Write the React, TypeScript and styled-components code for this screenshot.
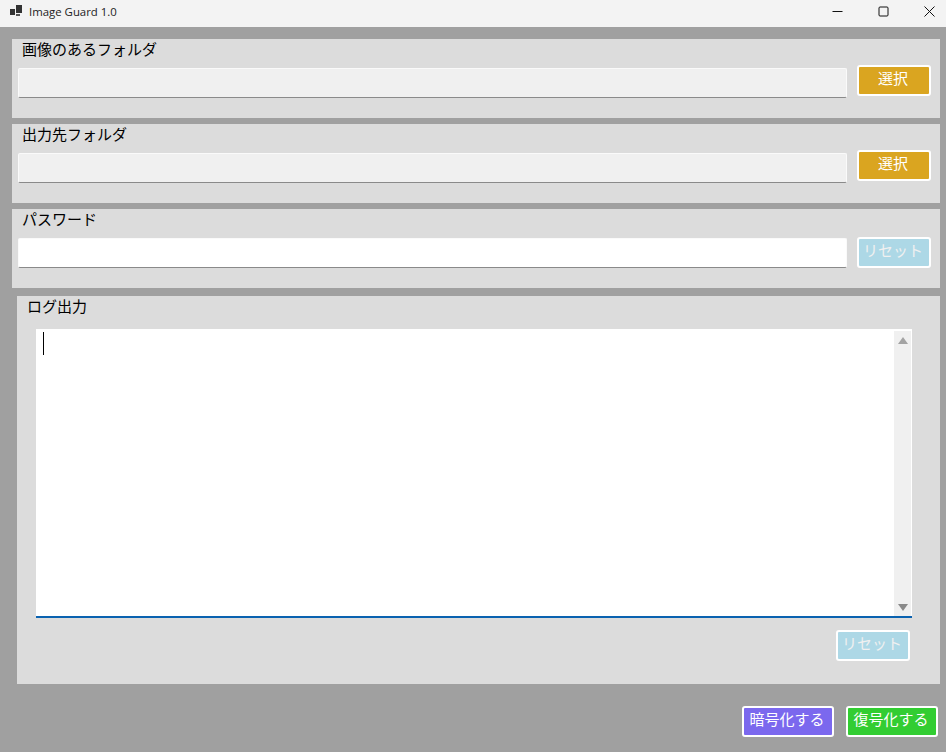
import React from "react";
import styled, { createGlobalStyle } from "styled-components";

const Global = createGlobalStyle`
  html, body { margin: 0; padding: 0; height: 100%; background: #a0a0a0; }
  body { font-family: "Noto Sans CJK JP", "Noto Sans", sans-serif; overflow: hidden; }
`;

const Window = styled.div`
  width: 946px;
  height: 752px;
  display: flex;
  flex-direction: column;
  background: #a0a0a0;
`;

const TitleBar = styled.div`
  height: 27px;
  flex: none;
  display: flex;
  align-items: center;
  background: #f3f3f3;
`;

const AppIcon = styled.svg`
  width: 12px;
  height: 12px;
  margin-left: 10px;
  margin-right: 7px;
  margin-top: -5px;
`;

const AppTitle = styled.span`
  font-family: "Open Sans", "Noto Sans", sans-serif;
  font-size: 11.4px;
  color: #222;
  flex: 1;
  margin-top: -5px;
`;

const WinButtons = styled.div`
  display: flex;
  margin-right: -6px;
  margin-top: -5px;
`;

const WinButton = styled.div`
  width: 46px;
  height: 22px;
  display: flex;
  align-items: center;
  justify-content: center;
`;

const Content = styled.div`
  display: flex;
  flex-direction: column;
  padding: 12px 6px 0 12px;
`;

const Panel = styled.section`
  height: 79px;
  background: #dcdcdc;
  padding: 0 0 0 6px;
  margin-bottom: 6px;
`;

const Label = styled.div`
  height: 20px;
  line-height: 19px;
  font-size: 15px;
  color: #000;
  margin-left: 4px;
  white-space: nowrap;
`;

const Row = styled.div`
  display: flex;
  align-items: flex-start;
  gap: 10px;
  margin-top: 6px;
`;

const Field = styled.div<{ $bg: string }>`
  width: 829px;
  height: 30px;
  margin-top: 3px;
  box-sizing: border-box;
  background: ${(p) => p.$bg};
  border: 1px solid #fafafa;
  border-bottom: 1px solid #8a8a8a;
  border-radius: 2px;
`;

const ActionButton = styled.button<{ $bg: string; $w?: number; $fg?: string; $nudge?: number }>`
  width: ${(p) => p.$w ?? 74}px;
  height: 31px;
  flex: none;
  box-sizing: border-box;
  margin-top: ${(p) => p.$nudge ?? 0}px;
  padding: 0 2px 6px 0;
  background: ${(p) => p.$bg};
  border: 2px solid #fff;
  border-radius: 3px;
  color: ${(p) => p.$fg ?? "#fff"};
  font-family: "Noto Sans CJK JP", sans-serif;
  font-size: 15px;
  line-height: 1;
  white-space: nowrap;
`;

const LogPanel = styled.section`
  height: 388px;
  margin-left: 5px;
  margin-top: 2px;
  background: #dcdcdc;
  display: flex;
  flex-direction: column;
`;

const LogLabel = styled(Label)`
  margin-left: 10px;
`;

const LogBox = styled.div`
  width: 876px;
  height: 289px;
  margin: 13px 0 0 19px;
  padding-top: 2px;
  box-sizing: border-box;
  display: flex;
  background: #fff;
  border-bottom: 2px solid #0a62b0;
`;

const LogText = styled.div`
  flex: 1;
  padding: 1px 0 0 7px;
`;

const Caret = styled.div`
  width: 1px;
  height: 23px;
  background: #000;
`;

const ScrollBar = styled.div`
  width: 17px;
  margin-right: 1px;
  background: #f0f0f0;
  display: flex;
  flex-direction: column;
  justify-content: space-between;
  align-items: center;
  padding: 6px 0 5px;
`;

const ArrowUp = styled.div`
  width: 0;
  height: 0;
  border-left: 5px solid transparent;
  border-right: 5px solid transparent;
  border-bottom: 7px solid #a3a3a3;
`;

const ArrowDown = styled.div`
  width: 0;
  height: 0;
  border-left: 5px solid transparent;
  border-right: 5px solid transparent;
  border-top: 7px solid #8a8a8a;
`;

const LogFooter = styled.div`
  display: flex;
  justify-content: flex-end;
  padding-right: 30px;
  margin-top: 12px;
`;

const Footer = styled.div`
  display: flex;
  justify-content: flex-end;
  gap: 12px;
  margin-top: 22px;
  padding-right: 2px;
`;

export default function App() {
  return (
    <Window>
      <Global />
      <TitleBar>
        <AppIcon viewBox="0 0 12 12">
          <rect x="0" y="4" width="5" height="6" fill="#333" />
          <rect x="6" y="0" width="6" height="8" fill="#333" />
          <rect x="6" y="9" width="4" height="2" fill="#555" />
        </AppIcon>
        <AppTitle>Image Guard 1.0</AppTitle>
        <WinButtons>
          <WinButton>
            <svg width="11" height="11" viewBox="0 0 11 11">
              <path d="M0.5 5.5H10.5" stroke="#111" strokeWidth="1" />
            </svg>
          </WinButton>
          <WinButton>
            <svg width="11" height="11" viewBox="0 0 11 11">
              <rect x="1" y="1" width="9" height="9" rx="1" fill="none" stroke="#111" strokeWidth="1" />
            </svg>
          </WinButton>
          <WinButton>
            <svg width="11" height="11" viewBox="0 0 11 11">
              <path d="M0.5 0.5L10.5 10.5M10.5 0.5L0.5 10.5" stroke="#111" strokeWidth="1" />
            </svg>
          </WinButton>
        </WinButtons>
      </TitleBar>
      <Content>
        <Panel>
          <Label>画像のあるフォルダ</Label>
          <Row>
            <Field $bg="#f0f0f0" />
            <ActionButton $bg="#daa520">選択</ActionButton>
          </Row>
        </Panel>
        <Panel>
          <Label>出力先フォルダ</Label>
          <Row>
            <Field $bg="#f0f0f0" />
            <ActionButton $bg="#daa520">選択</ActionButton>
          </Row>
        </Panel>
        <Panel>
          <Label>パスワード</Label>
          <Row>
            <Field $bg="#ffffff" />
            <ActionButton $bg="#add8e6" $fg="#f0f0f0" $nudge={2}>リセット</ActionButton>
          </Row>
        </Panel>
        <LogPanel>
          <LogLabel>ログ出力</LogLabel>
          <LogBox>
            <LogText>
              <Caret />
            </LogText>
            <ScrollBar>
              <ArrowUp />
              <ArrowDown />
            </ScrollBar>
          </LogBox>
          <LogFooter>
            <ActionButton $bg="#add8e6" $fg="#f0f0f0">リセット</ActionButton>
          </LogFooter>
        </LogPanel>
        <Footer>
          <ActionButton $bg="#7b68ee" $w={92}>暗号化する</ActionButton>
          <ActionButton $bg="#32cd32" $w={92}>復号化する</ActionButton>
        </Footer>
      </Content>
    </Window>
  );
}
